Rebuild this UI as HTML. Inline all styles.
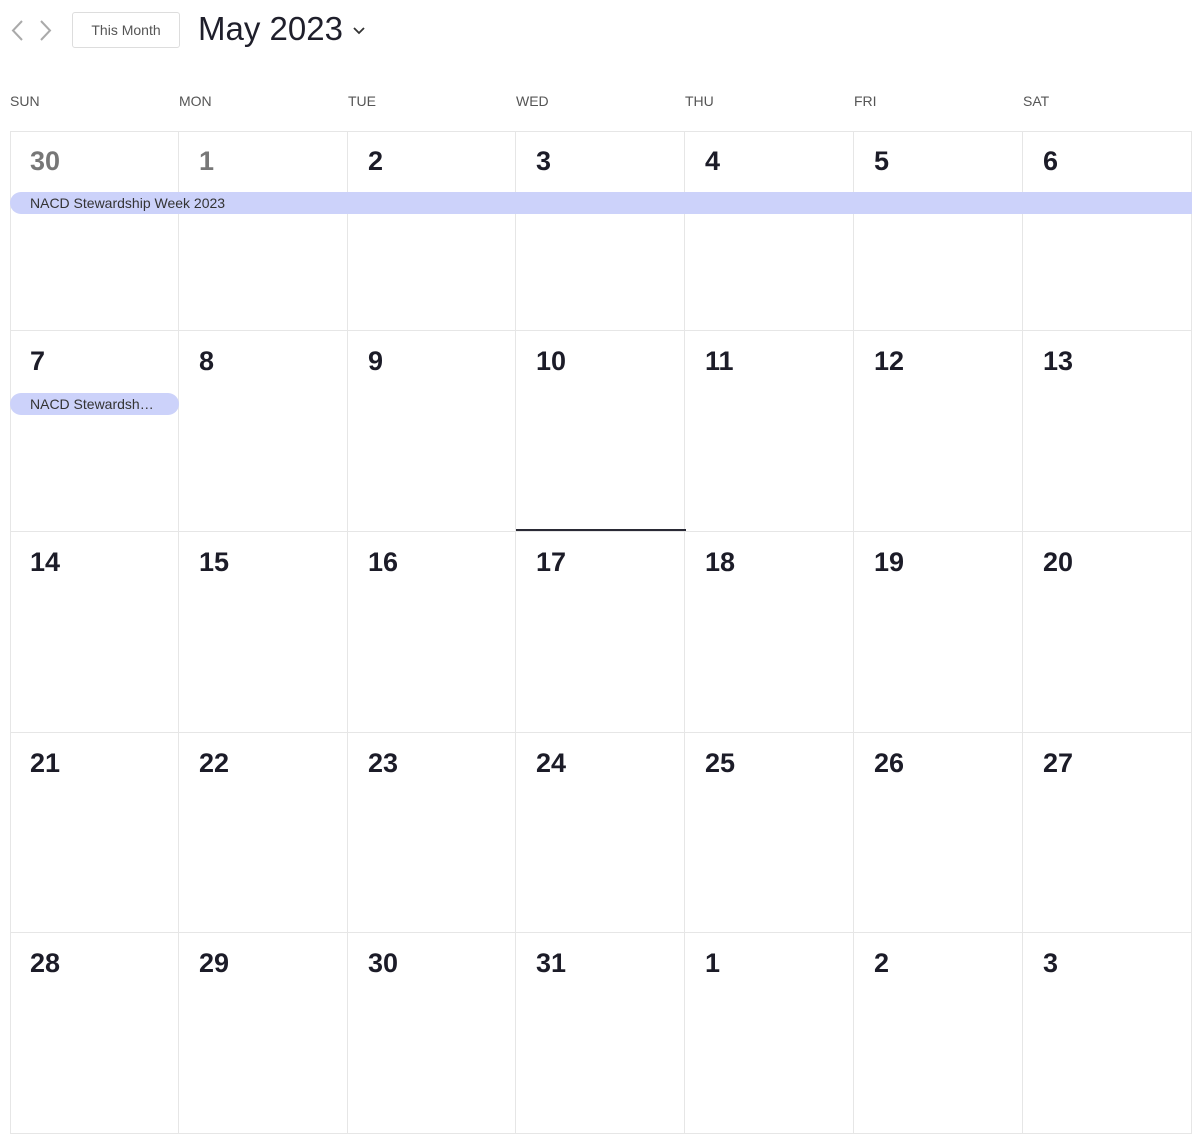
<!DOCTYPE html>
<html><head><style>
body{margin:0;background:#fff;font-family:"Liberation Sans",sans-serif;width:1200px;height:1141px;position:relative;overflow:hidden}
.abs{position:absolute}
.btn{left:72px;top:12px;width:106px;height:34px;border:1px solid #ddd;border-radius:3px;font-size:14px;color:#555;text-align:center;line-height:34px}
.title{left:198px;top:10px;font-size:33px;color:#1f1f2b}
.dow{top:93px;font-size:14px;color:#555}
.cell{position:absolute;border-right:1px solid #e6e6e6;border-bottom:1px solid #e6e6e6;box-sizing:border-box}
.num{position:absolute;left:20px;top:15px;font-size:27px;font-weight:bold;color:#1c1c28}
.grey{color:#777}
.ev{position:absolute;height:22px;background:#ccd2fa;border-radius:11px;font-size:14px;color:#333;line-height:22px;padding-left:20px;box-sizing:border-box}
</style></head><body>
<svg class="abs" style="left:6px;top:18px" width="52" height="26"><path d="M16 3 L7 12.5 L16 22" fill="none" stroke="#aaa" stroke-width="2"/><path d="M35 3 L44 12.5 L35 22" fill="none" stroke="#aaa" stroke-width="2"/></svg>
<div class="abs btn">This Month</div>
<div class="abs title">May 2023 <svg width="14" height="10" style="vertical-align:middle"><path d="M2 2 L7 7 L12 2" fill="none" stroke="#333" stroke-width="1.8"/></svg></div>
<div class="abs dow" style="left:10px">SUN</div>
<div class="abs dow" style="left:179px">MON</div>
<div class="abs dow" style="left:348px">TUE</div>
<div class="abs dow" style="left:516px">WED</div>
<div class="abs dow" style="left:685px">THU</div>
<div class="abs dow" style="left:854px">FRI</div>
<div class="abs dow" style="left:1023px">SAT</div>
<div class="abs" style="left:10px;top:131px;width:1182px;height:1003px;border-left:1px solid #e6e6e6;border-top:1px solid #e6e6e6;box-sizing:border-box"></div>
<div id="g"></div>
<script>
var xs=[10,179,348,516,685,854,1023,1192],ys=[131,331,532,733,933,1134];
var nums=[[30,1,2,3,4,5,6],[7,8,9,10,11,12,13],[14,15,16,17,18,19,20],[21,22,23,24,25,26,27],[28,29,30,31,1,2,3]];
var h='';
for(var r=0;r<5;r++)for(var c=0;c<7;c++){
h+='<div class="cell" style="left:'+xs[c]+'px;top:'+ys[r]+'px;width:'+(xs[c+1]-xs[c])+'px;height:'+(ys[r+1]-ys[r])+'px"><div class="num'+(r==0&&c<2?' grey':'')+'">'+nums[r][c]+'</div></div>';}
document.getElementById('g').innerHTML=h;
</script>
<div class="ev" style="left:10px;top:192px;width:1182px;border-radius:11px 0 0 11px">NACD Stewardship Week 2023</div>
<div class="ev" style="left:10px;top:393px;width:169px">NACD Stewardsh…</div>
<div class="abs" style="left:516px;top:529px;width:170px;height:2px;background:#2a2a35"></div>
</body></html>
